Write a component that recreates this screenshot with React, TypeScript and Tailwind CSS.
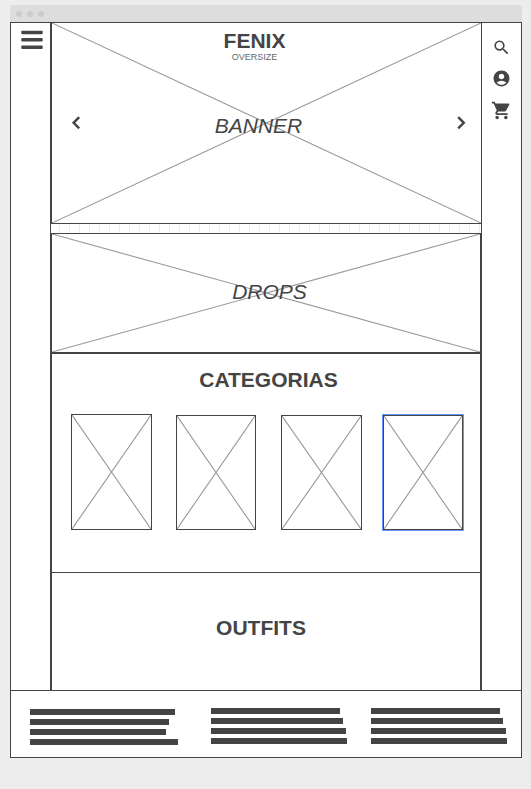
import type { ReactNode } from "react";
import { MdAccountCircle, MdSearch } from "react-icons/md";

function CrossBox({ className, children }: { className: string; children?: ReactNode }) {
  return (
    <div className={`relative border-[#444] ${className}`}>
      <svg
        className="absolute inset-0 h-full w-full"
        viewBox="0 0 100 100"
        preserveAspectRatio="none"
        aria-hidden="true"
      >
        <path d="M0 0 L100 100 M100 0 L0 100" fill="none" stroke="#999" strokeWidth="1.1" vectorEffect="non-scaling-stroke" />
      </svg>
      {children}
    </div>
  );
}

function Chevron({ d }: { d: string }) {
  return (
    <svg width="24" height="24" viewBox="0 0 24 24" fill="none" stroke="#444" strokeWidth="2.4" aria-hidden="true">
      <path d={d} />
    </svg>
  );
}

function CartIcon() {
  return (
    <svg width="21" height="21" viewBox="0 0 24 24" fill="#444" aria-hidden="true">
      <path d="M7 18c-1.1 0-1.99.9-1.99 2S5.9 22 7 22s2-.9 2-2-.9-2-2-2zM1 2v2h2l3.6 7.59-1.35 2.45c-.16.28-.25.61-.25.96 0 1.1.9 2 2 2h12v-2H7.42c-.14 0-.25-.11-.25-.25l.03-.12.9-1.63h7.45c.75 0 1.41-.41 1.75-1.03l3.58-6.49c.08-.14.12-.31.12-.48 0-.55-.45-1-1-1H5.21l-.94-2H1zm16 16c-1.1 0-1.99.9-1.99 2s.89 2 1.99 2 2-.9 2-2-.9-2-2-2z" />
    </svg>
  );
}

function TextBars({ widths, className = "" }: { widths: number[]; className?: string }) {
  return (
    <div className={`flex flex-col gap-1 ${className}`}>
      {widths.map((width, i) => (
        <div key={i} className="h-[6px] bg-[#444]" style={{ width }} />
      ))}
    </div>
  );
}

export default function App() {
  return (
    <div className="min-h-screen bg-[#ededed] pt-[5px] pr-[9px] pb-8 pl-[10px] font-['Liberation_Sans',Arial,sans-serif] text-[#444]">
      <div className="flex h-[17px] items-center gap-[5px] rounded-t-[3px] bg-[#ddd] px-[6px]">
        <span className="size-[6px] rounded-full bg-[#ccc]" />
        <span className="size-[6px] rounded-full bg-[#ccc]" />
        <span className="size-[6px] rounded-full bg-[#ccc]" />
      </div>

      <div className="border border-[#444] bg-white">
        <div className="flex">
          <nav className="w-[39px] shrink-0 pt-[7px] pl-[10px]">
            <button type="button" aria-label="Menu" className="block">
              <svg width="22" height="20" viewBox="0 0 22 20" fill="#444" aria-hidden="true">
                <rect x="0.3" y="0.7" width="21.4" height="3.5" rx="1" />
                <rect x="0.3" y="8.1" width="21.4" height="3.5" rx="1" />
                <rect x="0.3" y="15.5" width="21.4" height="3.5" rx="1" />
              </svg>
            </button>
          </nav>

          <main className="min-w-0 flex-1">
            <CrossBox className="border-r border-b border-l-2">
              <div className="relative flex h-[200px] flex-col pt-[7px]">
                <header className="pr-6 text-center">
                  <h1 className="text-[21px] leading-[22px] font-bold">FENIX</h1>
                  <p className="text-[9px] leading-[10px] text-[#666]">OVERSIZE</p>
                </header>
                <div className="mt-[49px] flex items-start justify-between pr-2 pl-3">
                  <button type="button" aria-label="Anterior">
                    <Chevron d="M15.2 6.2 L9.6 11.8 L15.2 17.4" />
                  </button>
                  <h2 className="flex-1 pt-1 pr-5 text-center text-[21px] leading-[22px] italic">BANNER</h2>
                  <button type="button" aria-label="Siguiente">
                    <Chevron d="M9.2 6.2 L14.8 11.8 L9.2 17.4" />
                  </button>
                </div>
              </div>
            </CrossBox>

            <div className="h-[9px] border-x border-[#444] bg-[repeating-linear-gradient(to_right,#fff_0px,#fff_8px,#eee_8px,#eee_9px,#fff_9px,#fff_10px)]" />

            <CrossBox className="border-x-2 border-t border-b-2">
              <h2 className="relative pt-[47px] pb-[49px] pl-[7px] text-center text-[21px] leading-[22px] italic">DROPS</h2>
            </CrossBox>

            <section className="border-x-2 border-b border-[#444] pt-[15px] pb-[42px]">
              <h2 className="pl-[5px] text-center text-[21px] leading-[22px] font-bold">CATEGORIAS</h2>
              <div className="mt-[23px] grid grid-cols-[105fr_105fr_102fr_80fr] items-end pr-[17px] pl-[19px]">
                <CrossBox className="h-[116px] w-[81px] border" />
                <CrossBox className="h-[115px] w-[80px] border" />
                <CrossBox className="h-[115px] w-[81px] border" />
                <CrossBox className="h-[115px] w-[80px] border ring-1 ring-[#6699ff]" />
              </div>
            </section>

            <section className="border-x-2 border-[#444] pt-[44px] pb-[51px]">
              <h2 className="pr-[10px] text-center text-[21px] leading-[22px] font-bold">OUTFITS</h2>
            </section>
          </main>

          <aside className="flex w-[39px] shrink-0 flex-col items-center gap-3 pt-[15px]">
            <button type="button" aria-label="Buscar">
              <MdSearch size={19} />
            </button>
            <button type="button" aria-label="Cuenta">
              <MdAccountCircle size={19} />
            </button>
            <button type="button" aria-label="Carrito">
              <CartIcon />
            </button>
          </aside>
        </div>

        <footer className="grid grid-cols-[181fr_160fr_150fr] items-start border-t border-[#444] pt-[17px] pb-3 pl-[19px]">
          <TextBars widths={[145, 139, 136, 148]} className="pt-px" />
          <TextBars widths={[129, 132, 135, 136]} />
          <TextBars widths={[129, 132, 135, 136]} />
        </footer>
      </div>
    </div>
  );
}
